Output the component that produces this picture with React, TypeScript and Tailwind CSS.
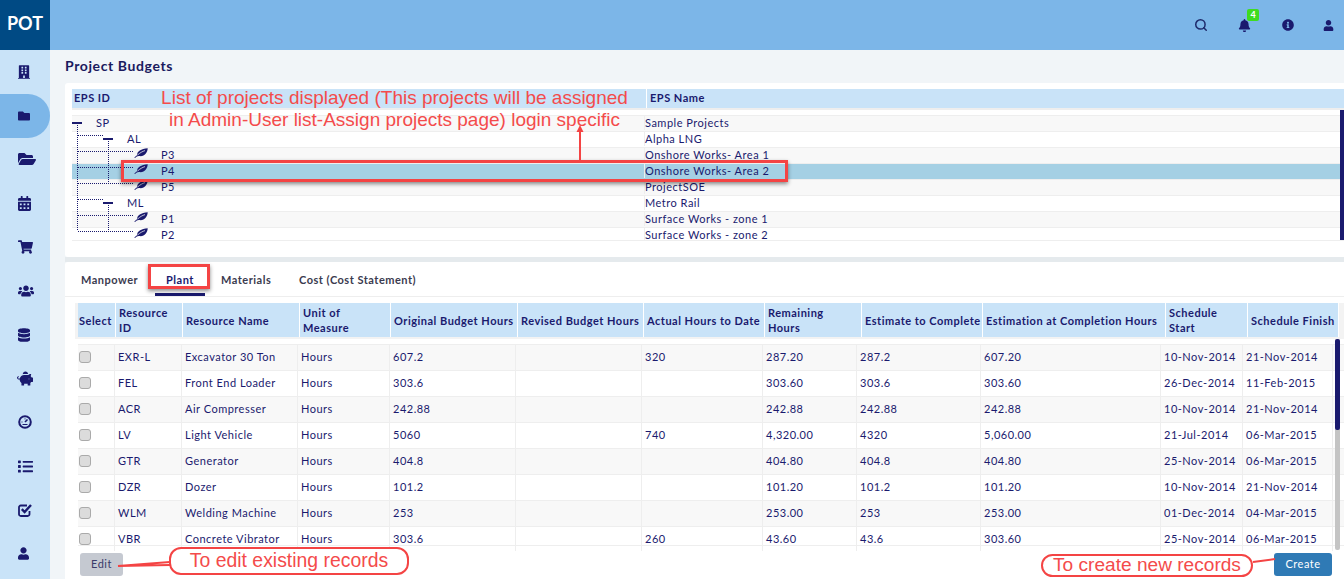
import {
  FaBell,
  FaBuilding,
  FaCalendarAlt,
  FaDatabase,
  FaFolder,
  FaFolderOpen,
  FaInfoCircle,
  FaList,
  FaPiggyBank,
  FaShoppingCart,
  FaUser,
  FaUsers,
} from 'react-icons/fa'
import { Search } from 'lucide-react'

function GaugeIcon({ className }: { className?: string }) {
  return (
    <svg className={className} viewBox="0 0 14 14" fill="none" stroke="currentColor">
      <circle cx="7" cy="7" r="5.8" strokeWidth="2" />
      <path d="M7 7L9.5 4.5" strokeWidth="1.6" />
      <path d="M3.5 7H4.5M7 3.4V4.4M9.5 9.5H4.5" strokeWidth="1" />
    </svg>
  )
}

function CheckIcon({ className }: { className?: string }) {
  return (
    <svg className={className} viewBox="0 0 14 14" fill="none" stroke="currentColor">
      <path d="M11.5 8V11.2A1.8 1.8 0 0 1 9.7 13H2.8A1.8 1.8 0 0 1 1 11.2V4.3A1.8 1.8 0 0 1 2.8 2.5H9" strokeWidth="1.8" />
      <path d="M3.8 6.2L6.6 9L13 2" strokeWidth="2.4" />
    </svg>
  )
}

function LeafIcon() {
  return (
    <svg className="ml-[62px] h-[10px] w-[14px] shrink-0 -translate-y-[2px]" viewBox="0 0 14 10">
      <path
        d="M0.3 9.6C1.6 8.4 2.6 7.6 3.3 7.1C2.6 3.2 7.2 1 13.7 0.2C13.6 4.8 10 9 5.2 8C3.6 7.8 2.4 8.6 1 10Z"
        fill="#1a1a6e"
      />
      <path d="M3.6 7C6 4.8 8.4 3.4 11 2.6" stroke="#ffffff" strokeWidth="0.7" fill="none" />
    </svg>
  )
}

const navIcons = [
  { Icon: FaBuilding, size: 'h-[14px] w-[12px] ml-0' },
  { Icon: FaFolder, size: 'h-[12px] w-[12px] ml-0' },
  { Icon: FaFolderOpen, size: 'h-[18px] w-[18px] ml-0' },
  { Icon: FaCalendarAlt, size: 'h-[15px] w-[13px] ml-0' },
  { Icon: FaShoppingCart, size: 'h-[14px] w-[15px] ml-0' },
  { Icon: FaUsers, size: 'h-[16px] w-[16px] ml-0' },
  { Icon: FaDatabase, size: 'h-[14px] w-[12px] ml-0' },
  { Icon: FaPiggyBank, size: 'h-[15px] w-[16px] -ml-[1px]' },
  { Icon: GaugeIcon, size: 'h-[14px] w-[14px] ml-0' },
  { Icon: FaList, size: 'h-[15px] w-[15px] ml-0' },
  { Icon: CheckIcon, size: 'h-[14px] w-[14px] ml-0' },
  { Icon: FaUser, size: 'h-[13px] w-[11px] ml-0' },
]

const treeRows = [
  { id: 'SP', name: 'Sample Projects', level: 0 },
  { id: 'AL', name: 'Alpha LNG', level: 1 },
  { id: 'P3', name: 'Onshore Works- Area 1', level: 2 },
  { id: 'P4', name: 'Onshore Works- Area 2', level: 2, selected: true },
  { id: 'P5', name: 'ProjectSOE', level: 2 },
  { id: 'ML', name: 'Metro Rail', level: 1 },
  { id: 'P1', name: 'Surface Works - zone 1', level: 2 },
  { id: 'P2', name: 'Surface Works - zone 2', level: 2 },
]

const headers = [
  { label: 'Select', width: 'w-[38px]' },
  { label: 'Resource ID', width: 'w-[67px]', wrap: 'w-[50px]' },
  { label: 'Resource Name', width: 'w-[117px]' },
  { label: 'Unit of Measure', width: 'w-[91px]', wrap: 'w-[60px]' },
  { label: 'Original Budget Hours', width: 'w-[127px]' },
  { label: 'Revised Budget Hours', width: 'w-[126px]' },
  { label: 'Actual Hours to Date', width: 'w-[121px]' },
  { label: 'Remaining Hours', width: 'w-[97px]', wrap: 'w-[70px]' },
  { label: 'Estimate to Complete', width: 'w-[121px]' },
  { label: 'Estimation at Completion Hours', width: 'w-[183px]' },
  { label: 'Schedule Start', width: 'w-[82px]', wrap: 'w-[60px]' },
  { label: 'Schedule Finish', width: 'w-[91px]' },
]

const bodyWidths = [
  'w-[37px]',
  'w-[67px]',
  'w-[116px]',
  'w-[92px]',
  'w-[126px]',
  'w-[126px]',
  'w-[121px]',
  'w-[94px]',
  'w-[124px]',
  'w-[180px]',
  'w-[82px]',
  'w-[90px]',
]

const rows = [
  ['EXR-L', 'Excavator 30 Ton', 'Hours', '607.2', '', '320', '287.20', '287.2', '607.20', '10-Nov-2014', '21-Nov-2014'],
  ['FEL', 'Front End Loader', 'Hours', '303.6', '', '', '303.60', '303.6', '303.60', '26-Dec-2014', '11-Feb-2015'],
  ['ACR', 'Air Compresser', 'Hours', '242.88', '', '', '242.88', '242.88', '242.88', '10-Nov-2014', '21-Nov-2014'],
  ['LV', 'Light Vehicle', 'Hours', '5060', '', '740', '4,320.00', '4320', '5,060.00', '21-Jul-2014', '06-Mar-2015'],
  ['GTR', 'Generator', 'Hours', '404.8', '', '', '404.80', '404.8', '404.80', '25-Nov-2014', '06-Mar-2015'],
  ['DZR', 'Dozer', 'Hours', '101.2', '', '', '101.20', '101.2', '101.20', '10-Nov-2014', '21-Nov-2014'],
  ['WLM', 'Welding Machine', 'Hours', '253', '', '', '253.00', '253', '253.00', '01-Dec-2014', '04-Mar-2015'],
  ['VBR', 'Concrete Vibrator', 'Hours', '303.6', '', '260', '43.60', '43.6', '303.60', '25-Nov-2014', '06-Mar-2015'],
]

function TreeLines() {
  return (
    <svg className="absolute left-0 top-0 h-[125px] w-[80px]" viewBox="0 0 80 125" fill="none" shapeRendering="crispEdges">
      <path
        d="M5.5 8V116M5.5 20.5H31M36.5 24V69M5.5 36.5H62M5.5 52.5H62M5.5 68.5H62M5.5 84.5H31M36.5 90V116M5.5 100.5H62M5.5 116.5H62"
        stroke="#1a1a6e"
        strokeWidth="1"
        strokeDasharray="1 1"
      />
    </svg>
  )
}

function Collapse() {
  return <span className="block h-[2px] w-[10px] bg-[#1a1a6e]" />
}

export default function App() {
  return (
    <div className="relative flex h-[579px] w-[1344px] flex-col overflow-hidden bg-[#f1f5f8] font-['Lato','Open_Sans',sans-serif] text-[11px] tracking-[0.5px] text-[#1a1a6e]">
      {/* Top bar */}
      <header className="flex h-[50px] shrink-0 items-center bg-[#7cb6e8]">
        <div className="flex h-[50px] w-[50px] items-center justify-center bg-[#004a84] pb-[3px] text-[18px] font-bold tracking-normal text-white">
          POT
        </div>
        <div className="ml-auto flex items-center">
          <Search className="mr-[30px] h-[14px] w-[14px] text-[#1e2a6b]" strokeWidth={2.6} />
          <div className="relative mr-[31px]">
            <FaBell className="h-[13px] w-[13px] text-[#1a1a6e]" />
            <span className="absolute left-[9px] top-[-10px] flex h-[12px] w-[12px] items-center justify-center rounded-[2px] bg-[#3fdc20] text-[9px] font-bold tracking-normal text-white">
              4
            </span>
          </div>
          <FaInfoCircle className="mr-[29px] h-[12px] w-[12px] text-[#1a1a6e]" />
          <FaUser className="mr-[10px] h-[11px] w-[11px] text-[#1a1a6e]" />
        </div>
      </header>

      <div className="flex min-h-0 flex-1">
        {/* Side nav */}
        <nav className="flex w-[50px] shrink-0 flex-col bg-[#c9e3f8]">
          {navIcons.map(({ Icon, size }, i) => (
            <div
              key={i}
              className={`flex h-[43.8px] shrink-0 items-center pl-[18px] ${
                i === 1 ? 'rounded-r-[22px] bg-[#7cb6e8]' : ''
              }`}
            >
              <Icon className={`${size} text-[#1a1a6e]`} />
            </div>
          ))}
        </nav>

        <main className="relative min-w-0 flex-1 pl-[15px]">
          <h1 className="pt-[8px] text-[14px] font-bold leading-[16px] tracking-[0.6px] text-[#1a1a5e]">
            Project Budgets
          </h1>

          {/* EPS tree */}
          <section className="relative mt-[9px] h-[174px] rounded-l-[3px] bg-white pl-[7px] pt-[6px]">
            <div className="flex h-[21px] border-b-2 border-[#eeeeee] bg-[#c9e3f8] font-bold leading-[17px]">
              <div className="w-[575px] border-r border-white pl-[2px]">EPS ID</div>
              <div className="flex-1 pl-[3px]">EPS Name</div>
            </div>
            <div className="relative mt-[5px] h-[126px] overflow-hidden border-b border-[#eeeeee]">
              {treeRows.map((row, i) => (
                <div
                  key={row.id}
                  className={`flex h-[16px] items-center border-t border-[#eeeeee] pb-[2px] leading-[15px] ${
                    row.selected ? 'bg-[#a5d0e4]' : i % 2 === 0 ? 'bg-[#f8f8f8]' : 'bg-white'
                  }`}
                >
                  <div className="relative flex h-full w-[572px] shrink-0 items-center">
                    {row.level === 0 && (
                      <>
                        <Collapse />
                        <span className="ml-[14px]">{row.id}</span>
                      </>
                    )}
                    {row.level === 1 && (
                      <>
                        <span className="ml-[31px]">
                          <Collapse />
                        </span>
                        <span className="ml-[14px]">{row.id}</span>
                      </>
                    )}
                    {row.level === 2 && (
                      <>
                        <LeafIcon />
                        <span className="ml-[13px]">{row.id}</span>
                      </>
                    )}
                  </div>
                  <div className="border-l border-[#eeeeee]">{row.name}</div>
                </div>
              ))}
              <TreeLines />
            </div>
            <div className="absolute right-0 top-[27px] h-[130px] w-[4px] bg-[#1a1a6e]" />
          </section>

          <div className="h-[5px] bg-[#e5eaed]" />

          {/* Tabs and table */}
          <section className="h-[319px] rounded-l-[3px] bg-white">
            <div className="flex h-[35px] items-end border-b border-[#eeeeee] pl-[16px] font-bold">
              {['Manpower', 'Plant', 'Materials', 'Cost (Cost Statement)'].map((tab) => (
                <div
                  key={tab}
                  className={`h-[30px] pt-[5px] leading-[17px] ${
                    tab === 'Manpower'
                      ? 'w-[74px]'
                      : tab === 'Plant'
                        ? 'mr-[16px] w-[50px] border-b-[3px] border-[#1a1a6e] text-center'
                        : tab === 'Materials'
                          ? 'mr-[28px] w-[50px]'
                          : ''
                  } ${tab === 'Plant' ? '' : 'text-[#3b3b4f]'}`}
                >
                  {tab}
                </div>
              ))}
            </div>

            <div className="relative ml-[10px] mt-[4px] pt-[2px]">
              <div className="bg-[#f3f3f3] pb-[2px] pl-[3px]">
                <div className="flex h-[34px] font-bold leading-[15px]">
                  {headers.map((h, i) => (
                    <div
                      key={h.label}
                      className={`${h.width} flex shrink-0 items-center border-r border-white bg-[#c9e3f8] ${
                        i === 0 ? 'pl-[1px]' : 'pl-[3px]'
                      }`}
                    >
                      <span className={h.wrap}>{h.label}</span>
                    </div>
                  ))}
                </div>
              </div>
              <div className="relative ml-[3px] h-[212px] overflow-hidden bg-white pt-[5px]">
                {rows.map((row, i) => (
                  <div
                    key={row[0]}
                    className={`flex h-[26px] border-t border-[#eeeeee] leading-[23px] ${
                      i % 2 === 0 ? 'bg-[#f8f8f8]' : 'bg-white'
                    }`}
                  >
                    <div className={`${bodyWidths[0]} flex shrink-0 items-center border-r border-[#eeeeee] pb-[1px] pl-[1px]`}>
                      <span className="h-[12px] w-[12px] shrink-0 rounded-[3px] border border-[#aaaaaa] bg-[#dcdcdc]" />
                    </div>
                    {row.map((cell, j) => (
                      <div
                        key={j}
                        className={`${bodyWidths[j + 1]} shrink-0 whitespace-nowrap border-r border-[#eeeeee] pl-[3px]`}
                      >
                        {cell}
                      </div>
                    ))}
                  </div>
                ))}
                <div className="absolute bottom-[5px] left-0 right-0 h-[1px] bg-[#eeeeee]" />
              </div>
              <div className="absolute right-[4px] top-[38px] h-[211px] w-[5px] rounded-[2px] bg-[#c4c4c4]">
                <div className="h-[91px] rounded-[2px] bg-[#1a1a6e]" />
              </div>
            </div>

            <div className="flex items-center justify-between pl-[15px] pr-[12px] pt-[2px]">
              <button className="h-[23px] w-[43px] rounded-[3px] bg-[#c5c9d1] text-[#3b3b6a]">Edit</button>
              <button className="h-[23px] w-[58px] rounded-[3px] bg-[#2f7ab5] text-white">Create</button>
            </div>
          </section>
        </main>
      </div>

      {/* Annotations drawn over the page */}
      <div className="absolute left-[121px] top-[160px] h-[22px] w-[667px] border-[3px] border-[#f44444] shadow-[0_2px_4px_rgba(0,0,0,0.45)]" />
      <div className="absolute left-[148px] top-[264px] h-[25px] w-[62px] border-[3px] border-[#f44444] shadow-[0_2px_4px_rgba(0,0,0,0.45)]" />
      <div className="absolute left-[90px] top-[87px] w-[609px] text-center font-['Liberation_Sans',sans-serif] text-[19px] leading-[22px] tracking-normal text-[#f44b4b]">
        <div>List of projects displayed (This projects will be assigned</div>
        <div>in Admin-User list-Assign projects page) login specific</div>
      </div>
      <div className="absolute left-[169px] top-[547px] flex h-[28px] w-[240px] items-center justify-center rounded-[12px] border-2 border-[#f44444] bg-white font-['Liberation_Sans',sans-serif] text-[19.4px] tracking-normal text-[#f44b4b]">
        To edit existing records
      </div>
      <div className="absolute left-[1041px] top-[554px] flex h-[23px] w-[212px] items-center justify-center rounded-[12px] border-2 border-[#f44444] bg-white font-['Liberation_Sans',sans-serif] text-[19.1px] tracking-normal text-[#f44b4b]">
        To create new records
      </div>
      <svg className="pointer-events-none absolute left-0 top-0 h-[579px] w-[1344px]" viewBox="0 0 1344 579" fill="none">
        <path d="M580 160V129" stroke="#f44444" strokeWidth="2" />
        <path d="M576.5 132L580 125L583.5 132Z" fill="#f44444" />
        <path d="M118 566L170 562M118 566L170 565M1253 562L1275 559" stroke="#f44444" strokeWidth="2" />
      </svg>
    </div>
  )
}
